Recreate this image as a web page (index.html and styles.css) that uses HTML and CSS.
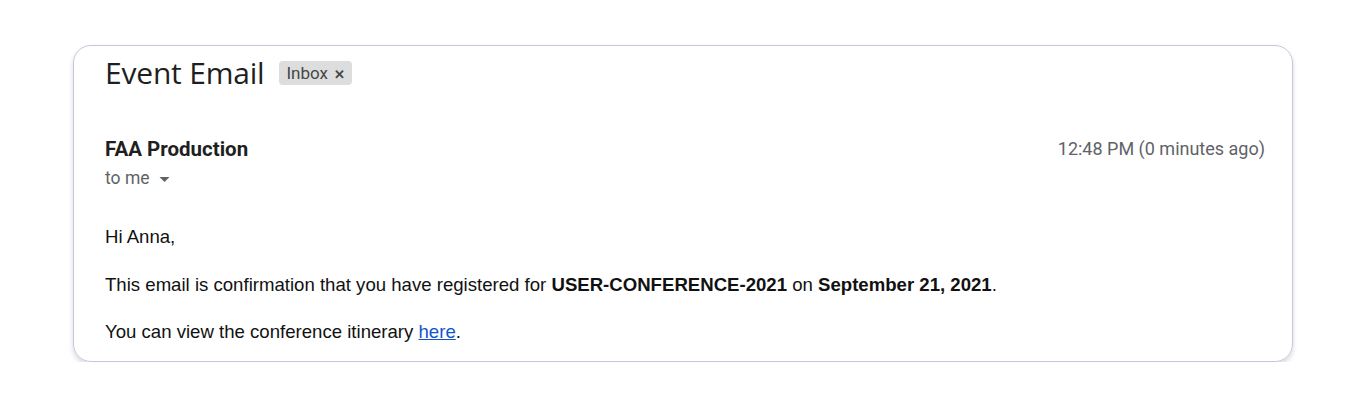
FILE: index.html
```html
<!DOCTYPE html>
<html lang="en">
<head>
  <meta charset="UTF-8" />
  <title>Event Email</title>
  <link rel="stylesheet" href="styles.css">
</head>
<body>

<div class="page">
  <div class="card">
    <div class="subject">
      <h1>Event Email</h1>
      <span class="chip">Inbox <span class="chip-x">&#x2715;</span></span>
    </div>

    <div class="meta">
      <div class="from">
        <div class="sender">FAA Production</div>
        <div class="to">to me
          <svg width="11" height="5" viewBox="0 0 10 5"><path d="M0 0 L10 0 L5 5 Z" fill="#5f6368"/></svg>
        </div>
      </div>
      <div class="time">12:48 PM (0 minutes ago)</div>
    </div>

    <div class="body">
      <p>Hi Anna,</p>
      <p>This email is confirmation that you have registered for <b>USER-CONFERENCE-2021</b> on <b>September 21, 2021</b>.</p>
      <p>You can view the conference itinerary <a href="#">here</a>.</p>
    </div>
  </div>
</div>

</body>
</html>
```

FILE: styles.css
```css
* {
  box-sizing: border-box;
}

body {
  margin: 0;
  background: #ffffff;
  font-family: "Liberation Sans", Arial, sans-serif;
}

.page {
  padding: 45px 73px 0 73px;
}

.card {
  border: 1px solid #c4c7d6;
  border-radius: 18px;
  box-shadow: 0 3px 5px rgba(60, 64, 100, 0.2);
  padding: 6px 27px 18px 31px;
}

.subject {
  display: flex;
  align-items: center;
  gap: 15px;
}

.subject h1 {
  margin: 0;
  font-family: "Open Sans", sans-serif;
  font-weight: 400;
  font-size: 30px;
  color: #1f1f1f;
  letter-spacing: -0.2px;
}

.chip {
  background: #dddddd;
  border-radius: 4px;
  padding: 2px 7px;
  font-family: Roboto, sans-serif;
  font-size: 17px;
  color: #444746;
}

.chip-x {
  font-size: 13px;
  font-weight: 700;
  margin-left: 2px;
}

.meta {
  display: flex;
  justify-content: space-between;
  align-items: flex-start;
  margin-top: 44px;
}

.sender {
  font-family: Roboto, sans-serif;
  font-weight: 700;
  font-size: 20.5px;
  color: #1f1f1f;
}

.to {
  font-family: Roboto, sans-serif;
  font-size: 17.5px;
  color: #5f6368;
  margin-top: 7px;
}

.to svg {
  margin-left: 5px;
  vertical-align: middle;
}

.time {
  font-family: Roboto, sans-serif;
  font-size: 18px;
  color: #5f6368;
  margin-top: 1px;
}

.body {
  margin-top: 38px;
  font-size: 18.6px;
  color: #111111;
}

.body p {
  margin: 0 0 25px 0;
}

.body p:first-child {
  margin-bottom: 26px;
}

.body p:last-child {
  margin-bottom: 0;
}

.body a {
  color: #1155cc;
}
```
